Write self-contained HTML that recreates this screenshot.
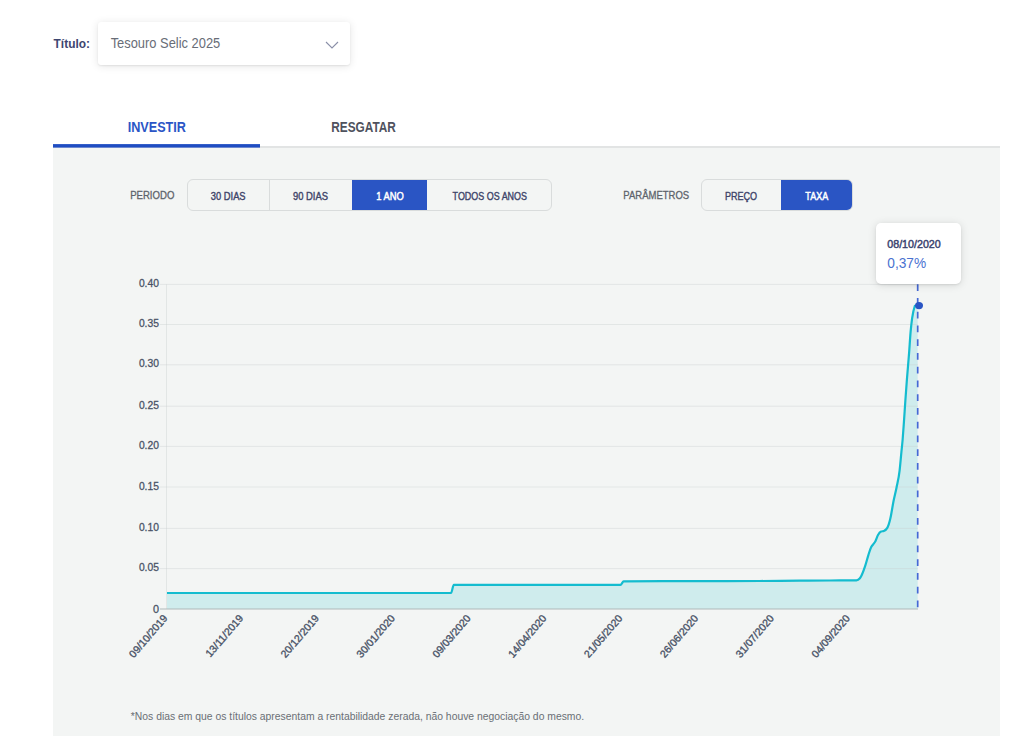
<!DOCTYPE html>
<html><head><meta charset="utf-8">
<style>
html,body{margin:0;padding:0;background:#fff;width:1023px;height:736px;overflow:hidden;font-family:"Liberation Sans",sans-serif;}
.abs{position:absolute;}
svg text{font-family:"Liberation Sans",sans-serif;}
#sel{left:98px;top:22px;width:252px;height:43px;background:#fff;border-radius:3px;box-shadow:0 1px 2px rgba(0,0,0,0.07),0 1px 9px rgba(0,0,0,0.11);}
#tabline{left:53px;top:146px;width:947px;height:2px;background:#e2e4e4;}
#panel{left:53px;top:148px;width:947px;height:588px;background:#f3f5f4;}
.bg{position:absolute;top:179px;height:32px;border:1px solid #d9dcdc;border-radius:6px;box-sizing:border-box;overflow:hidden;}
.bg div{position:absolute;top:0;bottom:0;box-sizing:border-box;}
.act{background:#2a55c4;}
#tip{left:876px;top:223px;width:85px;height:61px;background:#fff;border-radius:5px;box-shadow:0 1px 2px rgba(0,0,0,0.08),0 1px 9px rgba(0,0,0,0.13);}
</style></head><body>
<div class="abs" id="sel"></div>
<div class="abs" id="tabline"></div>
<div class="abs" id="panel"></div>
<div class="bg" style="left:187px;width:365px">
  <div style="left:0;width:82px;border-right:1px solid #d9dcdc"></div>
  <div class="act" style="left:164px;width:75px"></div>
</div>
<div class="bg" style="left:701px;width:152px">
  <div class="act" style="left:79px;width:72px"></div>
</div>
<svg class="abs" style="left:0;top:0" width="1023" height="736">
<rect x="53" y="144.1" width="207" height="3.5" fill="#1f4dc2"/>
<path d="M326,42 L332,48 L338,42" fill="none" stroke="#8a8fa8" stroke-width="1.1"/>
<path d="M167.00,593.00 C261.67,593.00 356.33,593.00 451.00,593.00 C451.93,593.00 452.87,584.90 453.80,584.90 C509.37,584.90 564.93,584.90 620.50,584.90 C621.53,584.90 622.57,581.41 623.60,581.40 C649.07,581.20 674.53,581.17 700.00,581.10 C720.00,581.05 740.00,581.07 760.00,581.00 C773.33,580.96 786.67,580.79 800.00,580.70 C810.00,580.63 820.00,580.55 830.00,580.50 C838.80,580.45 847.60,580.47 856.40,580.40 C857.57,580.39 858.73,579.70 859.90,578.30 C861.67,576.18 863.43,571.24 865.20,565.90 C866.23,562.78 867.27,558.56 868.30,555.30 C869.20,552.46 870.10,549.28 871.00,547.40 C871.73,545.87 872.47,545.33 873.20,544.30 C873.93,543.27 874.67,542.56 875.40,541.20 C876.27,539.59 877.13,536.57 878.00,535.00 C879.03,533.13 880.07,531.88 881.10,531.50 C882.00,531.17 882.90,531.33 883.80,531.00 C884.97,530.57 886.13,529.97 887.30,527.90 C888.33,526.07 889.37,522.75 890.40,518.30 C891.43,513.85 892.47,506.37 893.50,501.20 C894.50,496.20 895.50,492.70 896.50,487.70 C897.53,482.53 898.57,479.38 899.60,470.60 C900.20,465.50 900.80,458.31 901.40,452.20 C901.80,448.12 902.20,444.71 902.60,440.00 C903.03,434.89 903.47,428.55 903.90,422.40 C904.40,415.31 904.90,407.12 905.40,400.00 C905.90,392.88 906.40,386.20 906.90,379.70 C907.63,370.16 908.37,362.51 909.10,352.80 C909.60,346.18 910.10,337.63 910.60,331.90 C911.10,326.17 911.60,322.14 912.10,318.40 C913.10,310.91 914.10,307.96 915.10,305.00 L917.7,305.0 L917.7,609.0 L167,609.0 Z" fill="#cfeced"/>
<line x1="160" y1="609.0" x2="918" y2="609.0" stroke="#c8cccc" stroke-opacity="0.38" stroke-width="1"/>
<line x1="160" y1="568.6" x2="918" y2="568.6" stroke="#c8cccc" stroke-opacity="0.38" stroke-width="1"/>
<line x1="160" y1="528.4" x2="918" y2="528.4" stroke="#c8cccc" stroke-opacity="0.38" stroke-width="1"/>
<line x1="160" y1="487.0" x2="918" y2="487.0" stroke="#c8cccc" stroke-opacity="0.38" stroke-width="1"/>
<line x1="160" y1="446.4" x2="918" y2="446.4" stroke="#c8cccc" stroke-opacity="0.38" stroke-width="1"/>
<line x1="160" y1="406.2" x2="918" y2="406.2" stroke="#c8cccc" stroke-opacity="0.38" stroke-width="1"/>
<line x1="160" y1="364.8" x2="918" y2="364.8" stroke="#c8cccc" stroke-opacity="0.38" stroke-width="1"/>
<line x1="160" y1="324.5" x2="918" y2="324.5" stroke="#c8cccc" stroke-opacity="0.38" stroke-width="1"/>
<line x1="160" y1="284.4" x2="918" y2="284.4" stroke="#c8cccc" stroke-opacity="0.38" stroke-width="1"/>
<line x1="166.5" y1="284.4" x2="166.5" y2="609.0" stroke="#c8cccc" stroke-opacity="0.38" stroke-width="1"/>
<line x1="160" y1="609.00" x2="918" y2="609.00" stroke="#a9b3b3" stroke-opacity="0.5" stroke-width="1.3"/>
<path d="M167.00,593.00 C261.67,593.00 356.33,593.00 451.00,593.00 C451.93,593.00 452.87,584.90 453.80,584.90 C509.37,584.90 564.93,584.90 620.50,584.90 C621.53,584.90 622.57,581.41 623.60,581.40 C649.07,581.20 674.53,581.17 700.00,581.10 C720.00,581.05 740.00,581.07 760.00,581.00 C773.33,580.96 786.67,580.79 800.00,580.70 C810.00,580.63 820.00,580.55 830.00,580.50 C838.80,580.45 847.60,580.47 856.40,580.40 C857.57,580.39 858.73,579.70 859.90,578.30 C861.67,576.18 863.43,571.24 865.20,565.90 C866.23,562.78 867.27,558.56 868.30,555.30 C869.20,552.46 870.10,549.28 871.00,547.40 C871.73,545.87 872.47,545.33 873.20,544.30 C873.93,543.27 874.67,542.56 875.40,541.20 C876.27,539.59 877.13,536.57 878.00,535.00 C879.03,533.13 880.07,531.88 881.10,531.50 C882.00,531.17 882.90,531.33 883.80,531.00 C884.97,530.57 886.13,529.97 887.30,527.90 C888.33,526.07 889.37,522.75 890.40,518.30 C891.43,513.85 892.47,506.37 893.50,501.20 C894.50,496.20 895.50,492.70 896.50,487.70 C897.53,482.53 898.57,479.38 899.60,470.60 C900.20,465.50 900.80,458.31 901.40,452.20 C901.80,448.12 902.20,444.71 902.60,440.00 C903.03,434.89 903.47,428.55 903.90,422.40 C904.40,415.31 904.90,407.12 905.40,400.00 C905.90,392.88 906.40,386.20 906.90,379.70 C907.63,370.16 908.37,362.51 909.10,352.80 C909.60,346.18 910.10,337.63 910.60,331.90 C911.10,326.17 911.60,322.14 912.10,318.40 C913.10,310.91 914.10,307.96 915.10,305.00" fill="none" stroke="#14bccf" stroke-width="2.2" stroke-linejoin="round"/>
<line x1="917.7" y1="284.2" x2="917.7" y2="609.0" stroke="#4568d6" stroke-width="1.7" stroke-dasharray="6.8 6.95"/>
<ellipse cx="919" cy="305.6" rx="4" ry="3.6" fill="#2a55c4"/>
<text transform="translate(152.98,612.60) scale(0.9707,1)" font-size="11.14" fill="#485266" stroke="#485266" stroke-width="0.3">0</text>
<text transform="translate(138.89,571.07) scale(0.9143,1)" font-size="11.29" fill="#485266" stroke="#485266" stroke-width="0.3">0.05</text>
<text transform="translate(138.89,530.86) scale(0.9143,1)" font-size="11.29" fill="#485266" stroke="#485266" stroke-width="0.3">0.10</text>
<text transform="translate(138.89,489.53) scale(0.9143,1)" font-size="11.29" fill="#485266" stroke="#485266" stroke-width="0.3">0.15</text>
<text transform="translate(138.89,448.93) scale(0.9143,1)" font-size="11.29" fill="#485266" stroke="#485266" stroke-width="0.3">0.20</text>
<text transform="translate(138.89,408.68) scale(0.9143,1)" font-size="11.29" fill="#485266" stroke="#485266" stroke-width="0.3">0.25</text>
<text transform="translate(138.89,367.34) scale(0.9143,1)" font-size="11.29" fill="#485266" stroke="#485266" stroke-width="0.3">0.30</text>
<text transform="translate(138.89,327.00) scale(0.9143,1)" font-size="11.29" fill="#485266" stroke="#485266" stroke-width="0.3">0.35</text>
<text transform="translate(138.89,286.85) scale(0.9143,1)" font-size="11.29" fill="#485266" stroke="#485266" stroke-width="0.3">0.40</text>
<text transform="translate(168.00,618.50) rotate(-49.5) scale(1.0,1)" text-anchor="end" font-size="10.5" fill="#485266" stroke="#485266" stroke-width="0.35">09/10/2019</text>
<text transform="translate(243.83,618.50) rotate(-49.5) scale(1.0,1)" text-anchor="end" font-size="10.5" fill="#485266" stroke="#485266" stroke-width="0.35">13/11/2019</text>
<text transform="translate(319.66,618.50) rotate(-49.5) scale(1.0,1)" text-anchor="end" font-size="10.5" fill="#485266" stroke="#485266" stroke-width="0.35">20/12/2019</text>
<text transform="translate(395.49,618.50) rotate(-49.5) scale(1.0,1)" text-anchor="end" font-size="10.5" fill="#485266" stroke="#485266" stroke-width="0.35">30/01/2020</text>
<text transform="translate(471.32,618.50) rotate(-49.5) scale(1.0,1)" text-anchor="end" font-size="10.5" fill="#485266" stroke="#485266" stroke-width="0.35">09/03/2020</text>
<text transform="translate(547.15,618.50) rotate(-49.5) scale(1.0,1)" text-anchor="end" font-size="10.5" fill="#485266" stroke="#485266" stroke-width="0.35">14/04/2020</text>
<text transform="translate(622.98,618.50) rotate(-49.5) scale(1.0,1)" text-anchor="end" font-size="10.5" fill="#485266" stroke="#485266" stroke-width="0.35">21/05/2020</text>
<text transform="translate(698.81,618.50) rotate(-49.5) scale(1.0,1)" text-anchor="end" font-size="10.5" fill="#485266" stroke="#485266" stroke-width="0.35">26/06/2020</text>
<text transform="translate(774.64,618.50) rotate(-49.5) scale(1.0,1)" text-anchor="end" font-size="10.5" fill="#485266" stroke="#485266" stroke-width="0.35">31/07/2020</text>
<text transform="translate(850.47,618.50) rotate(-49.5) scale(1.0,1)" text-anchor="end" font-size="10.5" fill="#485266" stroke="#485266" stroke-width="0.35">04/09/2020</text>
</svg>
<div class="abs" id="tip"></div>
<svg class="abs" style="left:0;top:0" width="1023" height="736">
<text transform="translate(53.58,47.60) scale(0.9488,1)" font-size="12.57" font-weight="bold" fill="#3d4570">Título:</text>
<text transform="translate(110.64,47.50) scale(0.8991,1)" font-size="14.35" fill="#686d77">Tesouro Selic 2025</text>
<text transform="translate(127.64,131.70) scale(0.8851,1)" font-size="14.29" font-weight="bold" fill="#2b55c6">INVESTIR</text>
<text transform="translate(331.19,131.80) scale(0.8262,1)" font-size="14.35" font-weight="bold" fill="#4f525d">RESGATAR</text>
<text transform="translate(130.13,198.70) scale(0.8503,1)" font-size="11.30" fill="#5d636b" stroke="#5d636b" stroke-width="0.3">PERIODO</text>
<text transform="translate(623.34,198.80) scale(0.8298,1)" font-size="11.45" fill="#5d636b" stroke="#5d636b" stroke-width="0.3">PARÂMETROS</text>
<text transform="translate(210.82,199.70) scale(0.8168,1)" font-size="11.45" fill="#3d4469" stroke="#3d4469" stroke-width="0.4">30 DIAS</text>
<text transform="translate(293.02,199.70) scale(0.8214,1)" font-size="11.45" fill="#3d4469" stroke="#3d4469" stroke-width="0.4">90 DIAS</text>
<text transform="translate(376.34,199.70) scale(0.8179,1)" font-size="11.45" fill="#ffffff" stroke="#ffffff" stroke-width="0.5">1 ANO</text>
<text transform="translate(452.62,199.70) scale(0.7815,1)" font-size="11.45" fill="#3d4469" stroke="#3d4469" stroke-width="0.4">TODOS OS ANOS</text>
<text transform="translate(724.88,199.70) scale(0.7898,1)" font-size="11.45" fill="#3d4469" stroke="#3d4469" stroke-width="0.4">PREÇO</text>
<text transform="translate(805.32,199.70) scale(0.7866,1)" font-size="11.45" fill="#ffffff" stroke="#ffffff" stroke-width="0.5">TAXA</text>
<text transform="translate(887.28,248.00) scale(1.0252,1)" font-size="10.43" fill="#3b4470" stroke="#3b4470" stroke-width="0.45">08/10/2020</text>
<text transform="translate(887.29,268.00) scale(0.8895,1)" font-size="15.43" fill="#4a72d0">0,37%</text>
<text transform="translate(130.80,719.70) scale(0.9289,1)" font-size="11.16" fill="#6a6f75">*Nos dias em que os títulos apresentam a rentabilidade zerada, não houve negociação do mesmo.</text>
</svg>
</body></html>
